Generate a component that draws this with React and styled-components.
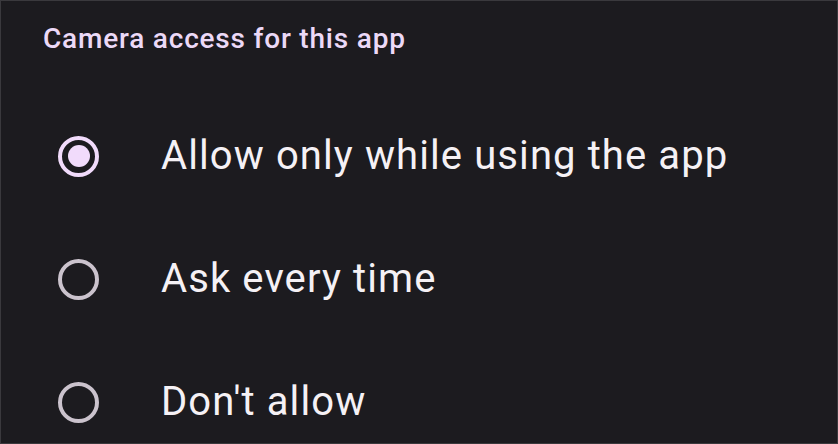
import styled, { createGlobalStyle } from "styled-components";
import { useState } from "react";

const GlobalStyle = createGlobalStyle`
  html, body {
    margin: 0;
    padding: 0;
    background: #1c1b1f;
  }
  * {
    box-sizing: border-box;
  }
`;

const options = [
  { id: "while", label: "Allow only while using the app" },
  { id: "ask", label: "Ask every time" },
  { id: "deny", label: "Don't allow" },
];

const App = () => {
  const [choice, setChoice] = useState("while");

  return (
    <>
      <GlobalStyle />
      <Screen>
        <Heading>Camera access for this app</Heading>
        <List>
          {options.map(o => (
            <Row key={o.id} onClick={() => setChoice(o.id)}>
              <Radio $checked={choice === o.id} />
              <Label>{o.label}</Label>
            </Row>
          ))}
        </List>
      </Screen>
    </>
  );
};

export default App;

const Screen = styled.div`
  width: 838px;
  height: 444px;
  overflow: hidden;
  background: #1c1b1f;
  border: 1px solid #3a393d;
  font-family: Roboto, "Liberation Sans", sans-serif;
  padding: 20px 0 0 42px;
`;

const Heading = styled.h2`
  margin: 0;
  font-size: 28px;
  font-weight: 500;
  line-height: 36px;
  color: #ecd9f7;
  letter-spacing: 0.8px;
`;

const List = styled.div`
  display: flex;
  flex-direction: column;
  margin-top: 37px;
`;

const Row = styled.div`
  display: flex;
  align-items: center;
  height: 124px;
  margin-top: -1px;
  cursor: pointer;
  &:first-child {
    margin-top: 0;
  }
`;

const Radio = styled.span`
  position: relative;
  width: 41px;
  height: 41px;
  margin-left: 15px;
  border-radius: 50%;
  border: 4px solid ${p => (p.$checked ? "#f1dbfb" : "#cbc3cd")};
  flex-shrink: 0;
  &::after {
    content: "";
    display: ${p => (p.$checked ? "block" : "none")};
    position: absolute;
    left: 50%;
    top: 50%;
    width: 22px;
    height: 22px;
    margin: -11px 0 0 -11px;
    border-radius: 50%;
    background: #f1dbfb;
  }
`;

const Label = styled.span`
  margin-left: 62px;
  font-size: 40px;
  font-weight: 400;
  color: #f5f1f5;
  line-height: 48px;
  letter-spacing: 1.1px;
`;
